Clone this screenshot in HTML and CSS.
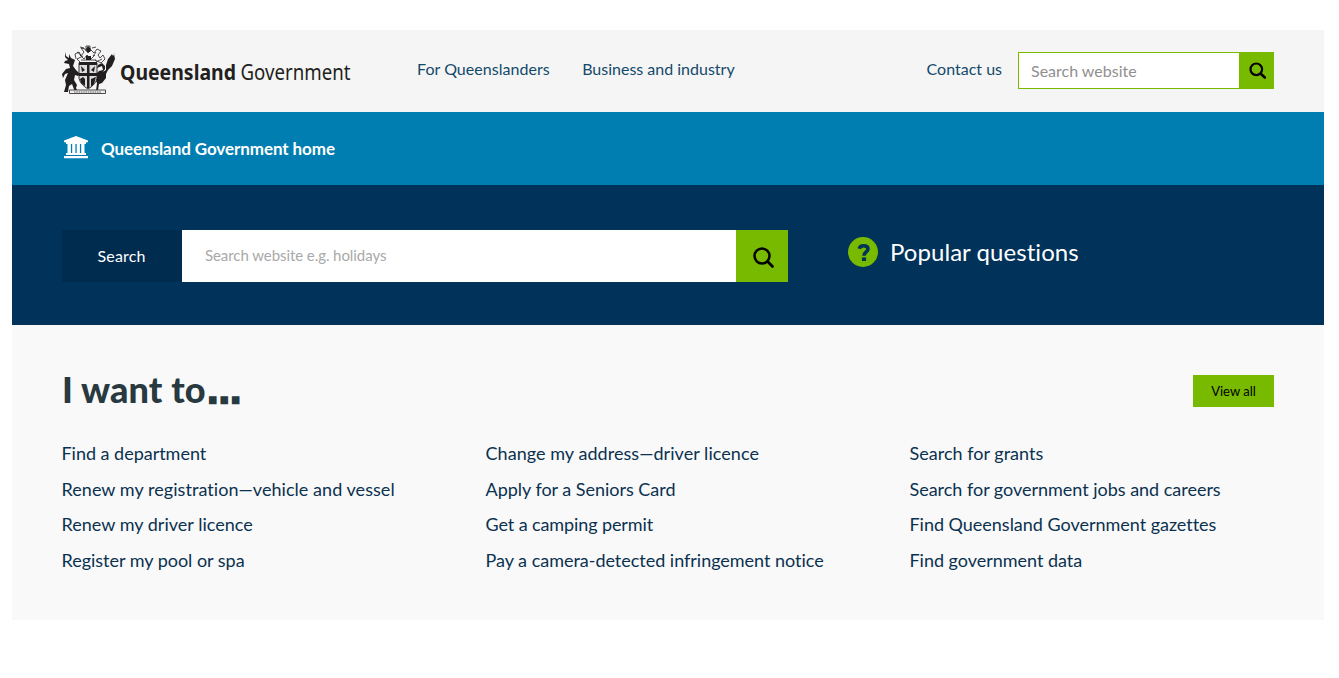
FILE: index.html
```html
<!DOCTYPE html>
<html lang="en">
<head>
<meta charset="utf-8">
<title>Queensland Government home</title>
<link rel="stylesheet" href="styles.css">
</head>
<body>
<div class="page">
  <header class="masthead">
    <a class="brand" aria-label="Queensland Government">
      <svg class="brand-logo" width="340" height="54" viewBox="0 0 340 54">
        <g fill="#231f20" stroke="#231f20" stroke-linejoin="round">
          <path stroke="none" d="M3 8l1 4 3 2 0-4 2 4 4 2-1 3-1 3 3 4 4 4-2 2-3-1-1 5 3 5-1 3 2 4h-3l-3-8-3 2-1 6H2l2-7-1-5 3-7-3 1-2 4-1-4 4-5 4-1-1-4-5-1 1-2 3-1-3-3z"/>
          <path stroke="none" d="M52 10l1 5-3 7-4 4-2 4v4l-4 5-3 1-1 6h3v1h-5l1-8-2-4 0-4 4-4 4-1-1-4-5 2 1-3 4-2 3 3v3l-2 3 3-2 0-5 2-6 4-5 1 2 2-3z"/>
          <path fill="#ddd" stroke-width=".9" d="M17 19h18v14c0 5-4 9-9 12-5-3-9-7-9-12z"/>
          <path stroke="none" d="M17 18h18v3H17zM17 29h18v3H17zM25 20h2.500v24H25zM18 35l3-2 2 2v7l-4-3zM29 35l5-2-2 7-3 3zM19 22l4 4-3 2zM33 22l-4 4 3 2z"/>
          <path fill="none" stroke-width=".8" d="M14 15l-1-5 4-2 2 4 3-4-3-4 4 1 3 4 3-3 3 3 3-4 4 2-3 4 2 3 3-3 2 4-4 4-6-3M15 15l6-3M15 15l3 3M34 18l6-3M18 11l4 4 3-4 4 4 4-4M19 16h15M24 7V2h4v5M22 4l-4-1M30 4l4-1M15 8l4 3M34 8l-3 4"/>
          <path stroke="none" d="M24 5l2-3 3 3-1 3h-3zM24 12h5v4h-5z"/>
          <path fill="#eee" stroke-width=".8" d="M7.500 46h36v3.500h-36z"/>
          <path fill="none" stroke-width=".7" stroke-dasharray="1.500 .8" d="M12 48h27"/>
        </g>
        <text class="logo-bold" x="58" y="35.500" textLength="116" lengthAdjust="spacingAndGlyphs">Queensland</text>
        <text class="logo-light" x="178.500" y="35.500" textLength="110" lengthAdjust="spacingAndGlyphs">Government</text>
      </svg>
    </a>
    <nav class="main-nav"><a>For Queenslanders</a><a>Business and industry</a></nav>
    <a class="contact">Contact us</a>
    <form class="site-search">
      <input type="text" placeholder="Search website" aria-label="Search website">
      <button type="button" aria-label="Search">
        <svg width="18" height="18" viewBox="0 0 18 18" fill="none" stroke="#000" stroke-linecap="round"><circle cx="7.300" cy="7.300" r="5.800" stroke-width="2.200"/><path d="M11.800 11.800L15.800 15.500" stroke-width="2.600"/></svg>
      </button>
    </form>
  </header>
  <div class="breadcrumb">
    <svg width="26" height="24" viewBox="0 0 26 24" fill="#fff"><path d="M13 0l12 4.500v1.800h-2V8H3V6.300H1V4.500zM4.500 8h3.400v9H4.500zM9.200 8h3.200v9H9.200zM13.700 8h3.200v9h-3.200zM18.200 8h3.300v9h-3.300zM3 17h20v2H3zM1 20h24v2.300H1z"/></svg>
    <a>Queensland Government home</a>
  </div>
  <section class="hero">
    <form class="hero-search">
      <label for="q">Search</label>
      <input id="q" type="text" placeholder="Search website e.g. holidays">
      <button type="button" aria-label="Search">
        <svg width="22" height="22" viewBox="0 0 22 22" fill="none" stroke="#000" stroke-linecap="round"><circle cx="9" cy="9" r="7.500" stroke-width="2.500"/><path d="M14.600 14.600L19.500 19.500" stroke-width="2.800"/></svg>
      </button>
    </form>
    <a class="popular">
      <svg width="30" height="30" viewBox="0 0 30 30"><circle cx="15" cy="15" r="15" fill="#78ba00"/><path d="M11.200 11.800C11.800 9.600 13.200 8.700 15.500 8.700C18.400 8.700 20 10 20 12C20 15 16 15 16 18.700" fill="none" stroke="#00325a" stroke-width="3.600"/><path d="M13.900 20.400h4.200V24h-4.200z" fill="#00325a"/></svg>
      <span>Popular questions</span>
    </a>
  </section>
  <main class="tasks">
    <div class="tasks-head"><h1>I want to<span class="ellipsis">…</span></h1><a class="view-all">View all</a></div>
    <div class="columns">
      <ul><li>Find a department</li><li class="wider">Renew my registration—vehicle and vessel</li><li class="wide">Renew my driver licence</li><li>Register my pool or spa</li></ul>
      <ul><li class="wider">Change my address—driver licence</li><li>Apply for a Seniors Card</li><li class="tight">Get a camping permit</li><li>Pay a camera-detected infringement notice</li></ul>
      <ul><li class="wide">Search for grants</li><li>Search for government jobs and careers</li><li>Find Queensland Government gazettes</li><li>Find government data</li></ul>
    </div>
  </main>
</div>
</body>
</html>
```
FILE: styles.css
```css
* { box-sizing: border-box; }
body { margin: 0; background: #fff; font-family: Lato, sans-serif; font-variant-ligatures: none; }
.page { width: 1312px; margin: 30px 0 0 12px; }
svg { display: block; flex: none; }
input, button { font-family: inherit; border: 0; margin: 0; padding: 0; border-radius: 0; }
.masthead { height: 82px; padding: 0 50px; background: #f5f5f5; display: flex; align-items: flex-start; color: #13496a; font-size: 16px; line-height: 20px; }
.brand { padding-top: 14px; width: 355px; }
.logo-bold { font: 700 21.500px "Noto Sans", sans-serif; fill: #231f20; }
.logo-light { font: 400 21.500px "Noto Sans", sans-serif; fill: #231f20; }
.main-nav { display: flex; gap: 32px; padding-top: 29px; white-space: nowrap; letter-spacing: .03px; }
.main-nav a + a { margin-left: .5px; letter-spacing: 0; }
.contact { margin-left: auto; padding-top: 29px; white-space: nowrap; }
.site-search { display: flex; width: 256px; height: 37px; margin: 22px 0 0 16px; }
.site-search input { width: 221px; border: 1px solid #78ba00; border-right: 0; padding: 0 12px; font-size: 16px; }
.site-search input::placeholder { color: #8f8f8f; }
.site-search button { width: 35px; background: #78ba00; padding: 0 0 0 10px; }
.breadcrumb { height: 73px; padding: 0 51px 1px; display: flex; align-items: center; gap: 12px; background: #007eb1; color: #fff; font-size: 17px; font-weight: 700; letter-spacing: -.08px; }
.breadcrumb a { padding-top: 1px; }
.hero { height: 140px; padding: 45px 50px; display: flex; background: #00325a; }
.hero-search { width: 726px; height: 52px; display: flex; }
.hero-search label { width: 120px; display: flex; align-items: center; justify-content: center; background: #002c50; color: #fff; font-size: 16px; padding: 0 1px 2px 0; letter-spacing: .15px; }
.hero-search input { width: 554px; padding: 0 23px 2px; font-size: 15px; letter-spacing: -.07px; }
.hero-search input::placeholder { color: #a9a9a9; }
.hero-search button { width: 52px; background: #78ba00; padding: 4px 0 0 17px; }
.popular { display: flex; align-items: center; gap: 12px; height: 30px; margin: 7px 0 0 60px; color: #fff; font-size: 24px; letter-spacing: .05px; }
.popular span { padding-bottom: 2px; }
.tasks { height: 295px; background: #f9f9f9; padding: 50px 50px 0; }
.tasks-head { display: flex; justify-content: space-between; height: 61px; }
h1 { margin: -9px 0 0; font-size: 36px; line-height: 46px; font-weight: 900; color: #28393f; white-space: nowrap; letter-spacing: .12px; }
.ellipsis { margin-left: .5px; font-family: "Liberation Sans", sans-serif; -webkit-text-stroke: 2.500px #28393f; }
.view-all { width: 81px; height: 32px; background: #78ba00; color: #000; font-size: 13px; line-height: 32px; text-align: center; }
.columns { display: grid; grid-template-columns: 424px 424px 1fr; margin-left: -.5px; }
ul { margin: 0; padding: 0; list-style: none; }
li { color: #0b3150; font-size: 18px; line-height: 35.700px; letter-spacing: -.02px; white-space: nowrap; }
.wide { letter-spacing: .02px; }
.wider { letter-spacing: .05px; }
.tight { letter-spacing: -.1px; }
```
